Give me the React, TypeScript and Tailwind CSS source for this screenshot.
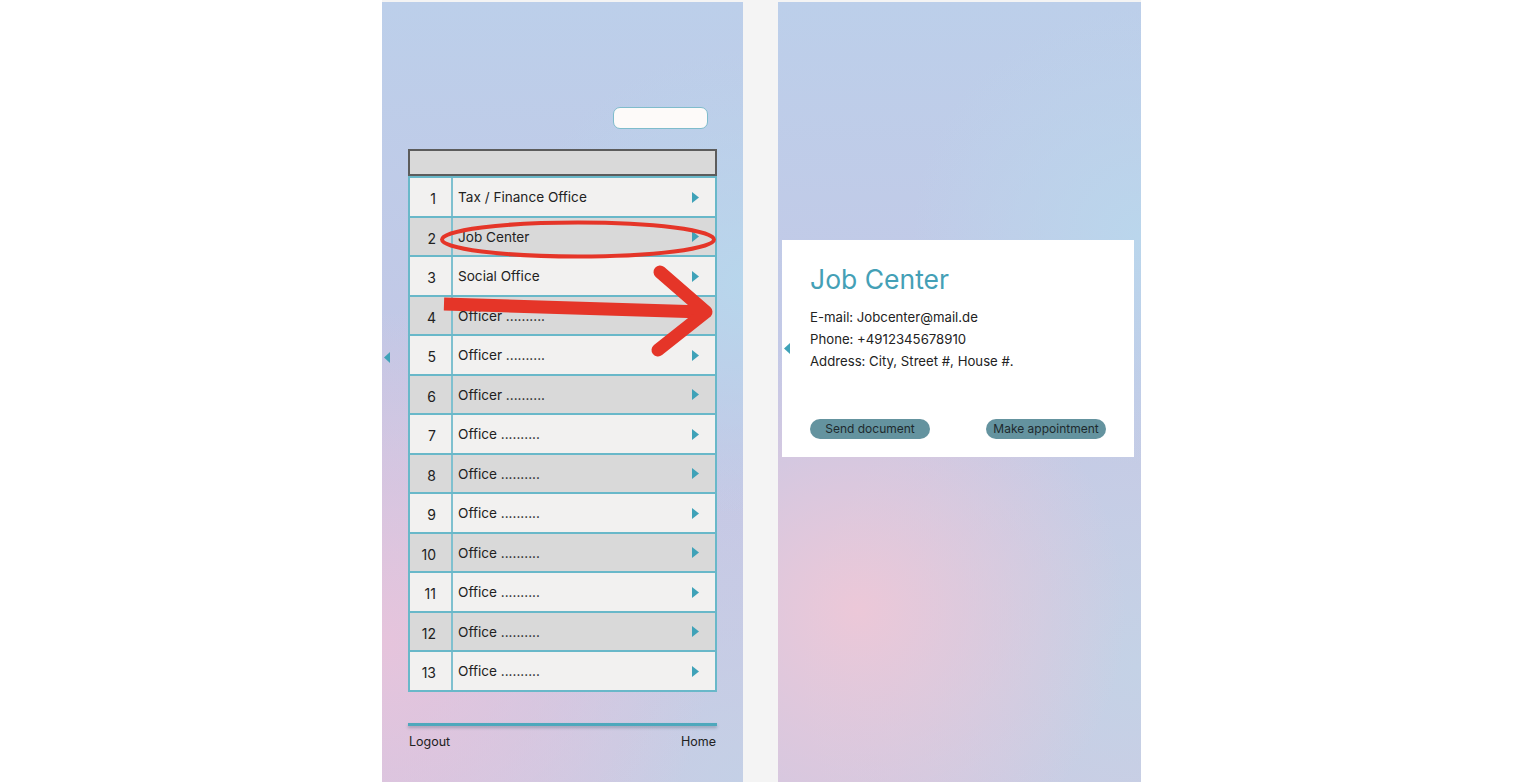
const rows = [
  "Tax / Finance Office",
  "Job Center",
  "Social Office",
  "Officer ..........",
  "Officer ..........",
  "Officer ..........",
  "Office ..........",
  "Office ..........",
  "Office ..........",
  "Office ..........",
  "Office ..........",
  "Office ..........",
  "Office ..........",
];

function RightTri() {
  return (
    <svg width="7" height="11" viewBox="0 0 7 11" className="shrink-0">
      <path d="M0 0 L7 5.5 L0 11 Z" fill="#3fa2b8" />
    </svg>
  );
}

function LeftTri() {
  return (
    <svg width="6" height="11" viewBox="0 0 6 11">
      <path d="M6 0 L0 5.5 L6 11 Z" fill="#3fa2b8" />
    </svg>
  );
}

function ListPanel() {
  return (
    <div className="relative w-[361px] h-[780px] bg-[radial-gradient(circle_at_0%_82%,#e6c4dc_0%,rgba(230,196,220,0)_45%),radial-gradient(circle_at_100%_36%,#b8d6ec_0%,rgba(184,214,236,0)_38%),radial-gradient(circle_at_100%_100%,#c4d0e6_0%,rgba(196,208,230,0)_40%),linear-gradient(180deg,#bccfea_0%,#c2c8e6_45%,#cfc6e2_100%)]">
      <div className="absolute left-[2px] top-[350px]">
        <LeftTri />
      </div>

      <div className="px-[26px] pt-[105px]">
        <div className="flex justify-end pr-[9px]">
          <div className="w-[95px] h-[22px] rounded-[7px] border border-[#7fbccc] bg-[#fdfaf9]" />
        </div>

        <div className="mt-[20px] h-[27px] bg-[#d9d9d9] border-2 border-[#5c5c5c]" />

        <div className="border-x-2 border-b-2 border-[#69b8c9]">
          {rows.map((r, i) => (
            <div
              key={i}
              className={
                "flex h-[39.5px] border-t-2 border-[#69b8c9] " +
                (i % 2 === 0 ? "bg-[#f2f1f0]" : "bg-[#d9d9d9]")
              }
            >
              <div className="w-[43px] shrink-0 border-r-2 border-[#7fc0cf] flex items-center justify-end pr-[15px] pt-[4px] text-[14px] text-[#222]">
                {i + 1}
              </div>
              <div className="flex-1 flex items-center justify-between pl-[5px] pr-[16px] pt-[1px] text-[13.6px] text-[#222]">
                <span>{r}</span>
                <RightTri />
              </div>
            </div>
          ))}
        </div>

        <div className="mt-[31px] h-[3px] bg-[#4ea8bc] shadow-[0_2px_3px_rgba(60,80,100,0.35)]" />
        <div className="mt-[7px] flex justify-between px-[1px] text-[12.5px] text-[#222]">
          <span>Logout</span>
          <span>Home</span>
        </div>
      </div>

      {/* red annotation */}
      <svg
        className="absolute left-0 top-0 pointer-events-none"
        width="361"
        height="780"
        viewBox="0 0 361 780"
      >
        <ellipse cx="196" cy="237.5" rx="136" ry="17" fill="none" stroke="#e53528" strokeWidth="4" />
        <path d="M62 302 L322 310" stroke="#e53528" strokeWidth="13" fill="none" />
        <path
          d="M278 270 L324 310 L276 348"
          stroke="#e53528"
          strokeWidth="13"
          strokeLinecap="round"
          strokeLinejoin="round"
          fill="none"
        />
      </svg>
    </div>
  );
}

function DetailPanel() {
  return (
    <div className="relative w-[363px] h-[780px] bg-[radial-gradient(circle_at_22%_78%,#ecc8d8_0%,rgba(236,200,216,0)_40%),radial-gradient(circle_at_100%_30%,#bad6ec_0%,rgba(186,214,236,0)_35%),radial-gradient(circle_at_100%_85%,#c4d2e6_0%,rgba(196,210,230,0)_45%),linear-gradient(180deg,#bccfea_0%,#c4c8e6_50%,#cfc8e2_100%)] pt-[238px] px-[4px]">
      <div className="relative w-[352px] h-[217px] bg-white pl-[28px] pt-[22px]">
        <div className="absolute left-[2px] top-[103px]">
          <LeftTri />
        </div>
        <div className="text-[26.5px] leading-[34px] text-[#44a0b6]">Job Center</div>
        <div className="mt-[10px] text-[13.2px] leading-[22px] text-[#222]">
          <div>E-mail: Jobcenter@mail.de</div>
          <div>Phone: +4912345678910</div>
          <div>Address: City, Street #, House #.</div>
        </div>
        <div className="mt-[47px] flex justify-between pr-[28px]">
          <button className="w-[120px] h-[20px] rounded-full bg-[#64939f] text-[12px] text-[#1e2a2e]">
            Send document
          </button>
          <button className="w-[120px] h-[20px] rounded-full bg-[#64939f] text-[12px] text-[#1e2a2e]">
            Make appointment
          </button>
        </div>
      </div>
    </div>
  );
}

export default function App() {
  return (
    <div className="w-[1532px] h-[782px] bg-white overflow-hidden font-['Inter',sans-serif]">
      <div className="ml-[382px] flex w-[759px] h-[782px] bg-[#f4f4f4] pt-[2px]">
        <ListPanel />
        <div className="w-[35px] shrink-0" />
        <DetailPanel />
      </div>
    </div>
  );
}
